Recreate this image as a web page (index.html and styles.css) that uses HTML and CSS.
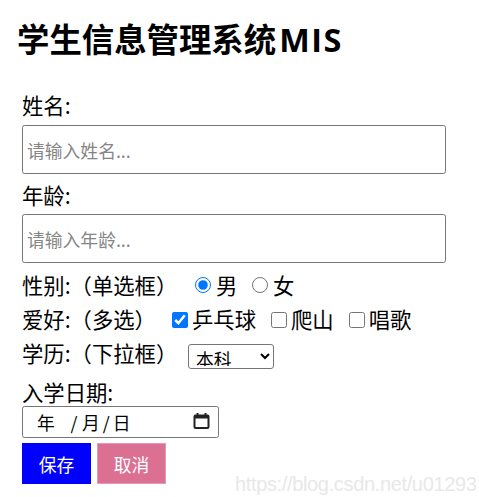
FILE: index.html
```html
<!DOCTYPE html>
<html lang="zh-CN">
<head>
<meta charset="utf-8">
<title>学生信息管理系统MIS</title>
<link rel="stylesheet" href="styles.css">
</head>
<body>
<div class="page">
  <h1 class="title">学生信息管理系统<span class="title-latin">MIS</span></h1>
  <form class="form">
    <label class="field-label first" for="name">姓名:</label>
    <input class="text-input first-input" id="name" type="text" placeholder="请输入姓名...">
    <label class="field-label second" for="age">年龄:</label>
    <input class="text-input second-input" id="age" type="text" placeholder="请输入年龄...">

    <div class="row gender-row">
      <span class="row-label gender-label">性别:（单选框）</span>
      <input class="radio" type="radio" name="sex" id="male" checked>
      <label class="opt" for="male">男</label>
      <input class="radio next" type="radio" name="sex" id="female">
      <label class="opt" for="female">女</label>
    </div>

    <div class="row hobby-row">
      <span class="row-label hobby-label">爱好:（多选）</span>
      <input class="check" type="checkbox" id="pp" checked>
      <label class="opt" for="pp">乒乓球</label>
      <input class="check next" type="checkbox" id="climb">
      <label class="opt" for="climb">爬山</label>
      <input class="check next" type="checkbox" id="sing">
      <label class="opt" for="sing">唱歌</label>
    </div>

    <div class="row edu-row">
      <span class="row-label edu-label">学历:（下拉框）</span>
      <select class="select">
        <option>本科</option>
        <option>专科</option>
        <option>硕士</option>
        <option>博士</option>
      </select>
    </div>

    <label class="field-label date-label">入学日期:</label>
    <div class="date-input">
      <span class="dt-y">年</span><span class="dt-sep1">/</span><span class="dt-m">月</span><span class="dt-sep2">/</span><span class="dt-d">日</span>
      <svg class="cal" width="17" height="16" viewBox="0 0 17 16" aria-hidden="true">
        <rect x="3.5" y="0" width="2" height="3" fill="#222"/>
        <rect x="11.5" y="0" width="2" height="3" fill="#222"/>
        <path fill="#222" fill-rule="evenodd" d="M2.5 1.5h12a2 2 0 0 1 2 2v10.5a2 2 0 0 1-2 2h-12a2 2 0 0 1-2-2v-10.5a2 2 0 0 1 2-2zM2.5 5.5v8.5h12v-8.5z"/>
      </svg>
    </div>

    <div class="buttons">
      <button type="button" class="btn btn-save">保存</button>
      <button type="button" class="btn btn-cancel">取消</button>
    </div>
  </form>
</div>
<div class="watermark">https://blog.csdn.net/u01293</div>
</body>
</html>
```

FILE: styles.css
```css
html, body {
  margin: 0;
  padding: 0;
  overflow: hidden;
  background: #fff;
}

body {
  font-family: "Noto Sans CJK SC", "Liberation Sans", sans-serif;
  color: #000;
  width: 479px;
  height: 497px;
}

.page {
  padding-left: 22px;
}

.title {
  margin: 18px 0 0 -5px;
  font-size: 32.4px;
  line-height: 40px;
  font-weight: 700;
}

.title-latin {
  font-family: "Open Sans", "Noto Sans CJK SC", sans-serif;
  font-weight: 700;
  margin-left: 3px;
  letter-spacing: 1.5px;
}

.form {
  display: flex;
  flex-direction: column;
  align-items: flex-start;
  margin: 0;
}

.field-label {
  font-size: 21.33px;
  line-height: 28px;
}

.field-label.first { margin-top: 31.5px; }
.field-label.second { margin-top: 6.5px; }
.field-label.date-label { margin-top: 9px; }

.text-input {
  box-sizing: border-box;
  width: 424px;
  height: 49px;
  margin: 0;
  padding: 0 4px;
  border: 1px solid #767676;
  border-radius: 2.5px;
  font-family: "Noto Sans CJK SC", sans-serif;
  font-size: 17.8px;
  color: #000;
  outline: none;
}

.text-input::placeholder {
  color: #858585;
}

.first-input { margin-top: 6.5px; }
.second-input { margin-top: 5.5px; }

.row {
  display: flex;
  align-items: center;
  height: 28px;
  font-size: 21.33px;
  line-height: 28px;
}

.gender-row { margin-top: 7.5px; }
.hobby-row { margin-top: 6px; }
.edu-row {
  margin-top: 6px;
  height: 30px;
  align-items: flex-start;
}

.row-label { flex: none; }
.gender-label { width: 173px; }
.hobby-label { width: 150px; }
.edu-label { width: 166px; }

.radio, .check {
  flex: none;
  width: 16px;
  height: 16px;
  margin: 0 5px 0 0;
}

.radio.next { margin-left: 14.7px; }
.check { margin: 3px 4px 0 0; }
.check.next { margin-left: 15px; }

.opt { white-space: nowrap; }

.select {
  box-sizing: border-box;
  width: 86px;
  height: 25px;
  margin-top: 5px;
  padding: 0 0 2px 3px;
  border: 1px solid #767676;
  border-radius: 3px;
  background: #fff;
  color: #000;
  font-family: "Noto Sans CJK SC", sans-serif;
  font-size: 17.8px;
}

.date-input {
  box-sizing: border-box;
  display: flex;
  align-items: center;
  width: 197px;
  height: 32px;
  margin-top: 0.5px;
  padding-left: 3px;
  border: 1px solid #767676;
  border-radius: 2.5px;
  font-size: 17.8px;
  line-height: 22px;
}

.dt-y { width: 40px; text-align: center; }
.dt-sep1 { width: 16px; text-align: center; }
.dt-m { width: 17.8px; }
.dt-sep2 { width: 13px; text-align: center; }
.dt-d { width: 17.8px; }

.cal {
  flex: none;
  margin: 0 8px 3px auto;
}

.buttons {
  display: flex;
  gap: 6px;
  margin-top: 5px;
}

.btn {
  width: 69px;
  height: 41px;
  margin: 0;
  padding: 0;
  border: none;
  color: #fff;
  font-family: "Noto Sans CJK SC", sans-serif;
  font-size: 17.8px;
  cursor: pointer;
}

.btn-save { background: #0000ff; }
.btn-cancel {
  background: #db7093;
  box-shadow: inset 0 0 0 1px #e59ab4;
}

.watermark {
  position: absolute;
  left: 235px;
  top: 473px;
  white-space: nowrap;
  font-family: "Liberation Sans", Arial, sans-serif;
  font-size: 20px;
  line-height: 23px;
  letter-spacing: -0.35px;
  color: #e8e8e8;
}
```
